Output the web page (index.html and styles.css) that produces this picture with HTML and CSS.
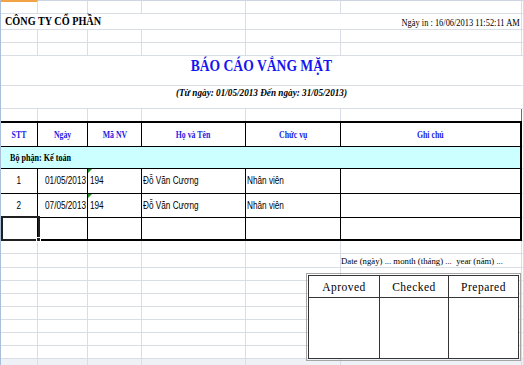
FILE: index.html
```html
<!DOCTYPE html>
<html lang="vi">
<head>
<meta charset="utf-8">
<title>Báo cáo vắng mặt</title>
<link rel="stylesheet" href="styles.css">
</head>
<body>
<div class="sheet">
  <div class="grid">
    <!-- row 1 -->
    <div class="c r1 ca"></div><div class="c r1"></div><div class="c r1"></div><div class="c r1"></div><div class="c r1"></div><div class="c r1"></div><div class="c r1"></div>
    <!-- row 2 -->
    <div class="c s4 company"><span class="sq k85">CÔNG TY CỔ PHẦN</span></div>
    <div class="c s2 rt printed"><span class="sq k80">Ngày in : 16/06/2013 11:52:11 AM</span></div>
    <div class="c"></div>
    <!-- row 3 -->
    <div class="c"></div><div class="c"></div><div class="c"></div><div class="c"></div><div class="c"></div><div class="c"></div><div class="c"></div>
    <!-- row 4 -->
    <div class="c"></div><div class="c"></div><div class="c"></div><div class="c"></div><div class="c"></div><div class="c"></div><div class="c"></div>
    <!-- row 5 -->
    <div class="c s6 ctr title"><span class="sq k80">BÁO CÁO VẮNG MẶT</span></div>
    <div class="c"></div>
    <!-- row 6 -->
    <div class="c s6 ctr subtitle"><span class="sq k835">(Từ ngày: 01/05/2013 Đến ngày: 31/05/2013)</span></div>
    <div class="c"></div>
    <!-- row 7 -->
    <div class="c nb"></div><div class="c nb"></div><div class="c nb"></div><div class="c nb"></div><div class="c nb"></div><div class="c nb pb"></div><div class="c nb"></div>
    <!-- header -->
    <div class="c t th"><span class="sq">STT</span></div>
    <div class="c t th"><span class="sq">Ngày</span></div>
    <div class="c t th"><span class="sq">Mã NV</span></div>
    <div class="c t th"><span class="sq">Họ và Tên</span></div>
    <div class="c t th"><span class="sq">Chức vụ</span></div>
    <div class="c t th tl"><span class="sq">Ghi chú</span></div>
    <div class="c"></div>
    <!-- group -->
    <div class="c t s6 tl grp"><span class="sq k81">Bộ phận: Kế toán</span></div>
    <div class="c"></div>
    <!-- data 1 -->
    <div class="c t d ctr"><span class="sq">1</span></div>
    <div class="c t d rt"><span class="sq">01/05/2013</span></div>
    <div class="c t d lt tri"><span class="sq">194</span></div>
    <div class="c t d lt1"><span class="sq">Đỗ Văn Cương</span></div>
    <div class="c t d lt1"><span class="sq">Nhân viên</span></div>
    <div class="c t d tl"></div>
    <div class="c"></div>
    <!-- data 2 -->
    <div class="c t d ctr"><span class="sq">2</span></div>
    <div class="c t d rt"><span class="sq">07/05/2013</span></div>
    <div class="c t d lt tri"><span class="sq">194</span></div>
    <div class="c t d lt1"><span class="sq">Đỗ Văn Cương</span></div>
    <div class="c t d lt1"><span class="sq">Nhân viên</span></div>
    <div class="c t d tl"></div>
    <div class="c"></div>
    <!-- data 3 (empty) -->
    <div class="c t tb"></div><div class="c t tb"></div><div class="c t tb"></div><div class="c t tb"></div><div class="c t tb"></div><div class="c t tb tl"></div><div class="c"></div>
    <!-- rows below -->
    <div class="c"></div><div class="c"></div><div class="c"></div><div class="c"></div><div class="c"></div><div class="c"></div><div class="c"></div>
    <div class="c"></div><div class="c"></div><div class="c"></div><div class="c"></div><div class="c"></div>
    <div class="c date"><span class="sq k97">Date (ngày) ... month (tháng) ...&nbsp; year (năm) ...</span></div>
    <div class="c"></div>
    <div class="c"></div><div class="c"></div><div class="c"></div><div class="c"></div><div class="c"></div><div class="c"></div><div class="c"></div>
    <div class="c"></div><div class="c"></div><div class="c"></div><div class="c"></div><div class="c"></div><div class="c"></div><div class="c"></div>
    <div class="c"></div><div class="c"></div><div class="c"></div><div class="c"></div><div class="c"></div><div class="c"></div><div class="c"></div>
    <div class="c"></div><div class="c"></div><div class="c"></div><div class="c"></div><div class="c"></div><div class="c"></div><div class="c"></div>
    <div class="c"></div><div class="c"></div><div class="c"></div><div class="c"></div><div class="c"></div><div class="c"></div><div class="c"></div>
    <div class="c"></div><div class="c"></div><div class="c"></div><div class="c"></div><div class="c"></div><div class="c"></div><div class="c"></div>
    <div class="c"></div><div class="c"></div><div class="c"></div><div class="c"></div><div class="c"></div><div class="c"></div><div class="c"></div>
    <div class="c last"></div><div class="c last"></div><div class="c last"></div><div class="c last"></div><div class="c last"></div><div class="c last"></div><div class="c last"></div>
  </div>

  <div class="rowhl"></div>
  <div class="sel"></div>
  <div class="handle"></div>

  <div class="sign">
    <div class="sh">Aproved</div>
    <div class="sh">Checked</div>
    <div class="sh sl">Prepared</div>
    <div class="sb"></div>
    <div class="sb"></div>
    <div class="sb sl"></div>
  </div>
</div>
</body>
</html>
```

FILE: styles.css
```css
html, body {
  margin: 0;
  padding: 0;
  background: #ffffff;
}

body {
  font-family: "Liberation Serif", "Times New Roman", serif;
  color: #000;
}

.sheet {
  position: relative;
  width: 523px;
  height: 365px;
  border-left: 1px solid #a9bfd9;
  overflow: hidden;
  background: #fff;
}

.grid {
  display: grid;
  grid-template-columns: 37px 50px 54px 104px 95px 181px 2px;
  grid-template-rows: 14px 16px 13px 13px 30px 23px 12px 26px 22px 25px 24px 23px 13px 14px 13px 13px 13px 13px 13px 13px 13px 6px;
}

.c {
  box-sizing: border-box;
  border-right: 1px solid #d8dde6;
  border-bottom: 1px solid #d8dde6;
  display: flex;
  align-items: center;
  white-space: nowrap;
  min-width: 0;
  position: relative;
}

.s2 { grid-column: span 2; }
.s4 { grid-column: span 4; }
.s6 { grid-column: span 6; }

.r1 { border-top: 1px solid #ccd5e1; }
.ca { border-top: 2px solid #f2a444; }
.nb { border-bottom: none; }
.pb { border-right-color: #6d6d6d; }
.last { background: #eef1f6; border-bottom: none; }

/* squeezed text, as in the reference capture */
.sq {
  display: inline-block;
  transform: scaleX(var(--k, 0.82));
  transform-origin: left center;
}
.ctr { justify-content: center; }
.ctr .sq { transform-origin: center center; }
.rt { justify-content: flex-end; }
.rt .sq { transform-origin: right center; }
.k80 { --k: 0.8; }
.k81 { --k: 0.81; }
.k835 { --k: 0.835; }
.k85 { --k: 0.85; }
.k97 { --k: 0.97; }

.company {
  align-items: flex-start;
  padding-left: 4px;
  font-weight: bold;
  font-size: 12px;
  line-height: 14px;
}

.printed {
  align-items: flex-start;
  padding-top: 2px;
  padding-right: 1px;
  font-size: 10.5px;
  line-height: 13px;
}

.title {
  align-items: flex-start;
  color: #1616ee;
  font-weight: bold;
  font-size: 17px;
  line-height: 20px;
  border-right-color: transparent;
}

.subtitle {
  align-items: flex-start;
  font-weight: bold;
  font-style: italic;
  font-size: 11px;
  line-height: 13px;
  border-right-color: transparent;
}

/* report table */
.t {
  border-right: 1px solid #000;
  border-bottom: 1px solid #000;
}
.tl { border-right-width: 2px; }
.tb { border-bottom-width: 2px; }

.th {
  border-top: 2px solid #000;
  justify-content: center;
  color: #1b1be6;
  font-weight: bold;
  font-size: 9.5px;
  line-height: 12px;
}
.th .sq { transform-origin: center center; }

.grp {
  background: #ccffff;
  padding-left: 9px;
  font-weight: bold;
  font-size: 10px;
  line-height: 12px;
}

.d {
  font-family: "Liberation Sans", Arial, sans-serif;
  font-size: 10px;
  line-height: 12px;
}
.d.rt { padding-right: 1px; }
.lt { padding-left: 2px; }
.lt1 { padding-left: 1px; }

.tri::before {
  content: "";
  position: absolute;
  left: 0;
  top: 0;
  border-top: 4px solid #1f8f1f;
  border-right: 4px solid transparent;
}

.date {
  align-items: flex-start;
  padding-top: 2px;
  font-size: 9px;
  line-height: 11px;
  overflow: visible;
}

/* selection overlays */
.rowhl {
  position: absolute;
  left: -1px;
  top: 217px;
  width: 1px;
  height: 24px;
  background: #f2a444;
}
.sel {
  position: absolute;
  left: 0;
  top: 216px;
  width: 39px;
  height: 25px;
  box-sizing: border-box;
  border: 2px solid #202020;
}
.handle {
  position: absolute;
  left: 35px;
  top: 237px;
  width: 3px;
  height: 3px;
  background: #202020;
  border: 1px solid #ffffff;
}

/* signature box (floating drawing object) */
.sign {
  position: absolute;
  left: 307px;
  top: 275px;
  width: 211px;
  height: 84px;
  box-sizing: border-box;
  border: 1px solid #353535;
  outline: 1px solid #a5a5a5;
  outline-offset: 1px;
  background: #fff;
  display: grid;
  grid-template-columns: 71px 69px 69px;
  grid-template-rows: 22px 1fr;
}
.sh {
  box-sizing: border-box;
  border-right: 1px solid #353535;
  border-bottom: 1px solid #353535;
  display: flex;
  align-items: center;
  justify-content: center;
  font-size: 11.5px;
  letter-spacing: 0.5px;
  line-height: 14px;
}
.sb {
  box-sizing: border-box;
  border-right: 1px solid #353535;
}
.sl { border-right: none; }
```
